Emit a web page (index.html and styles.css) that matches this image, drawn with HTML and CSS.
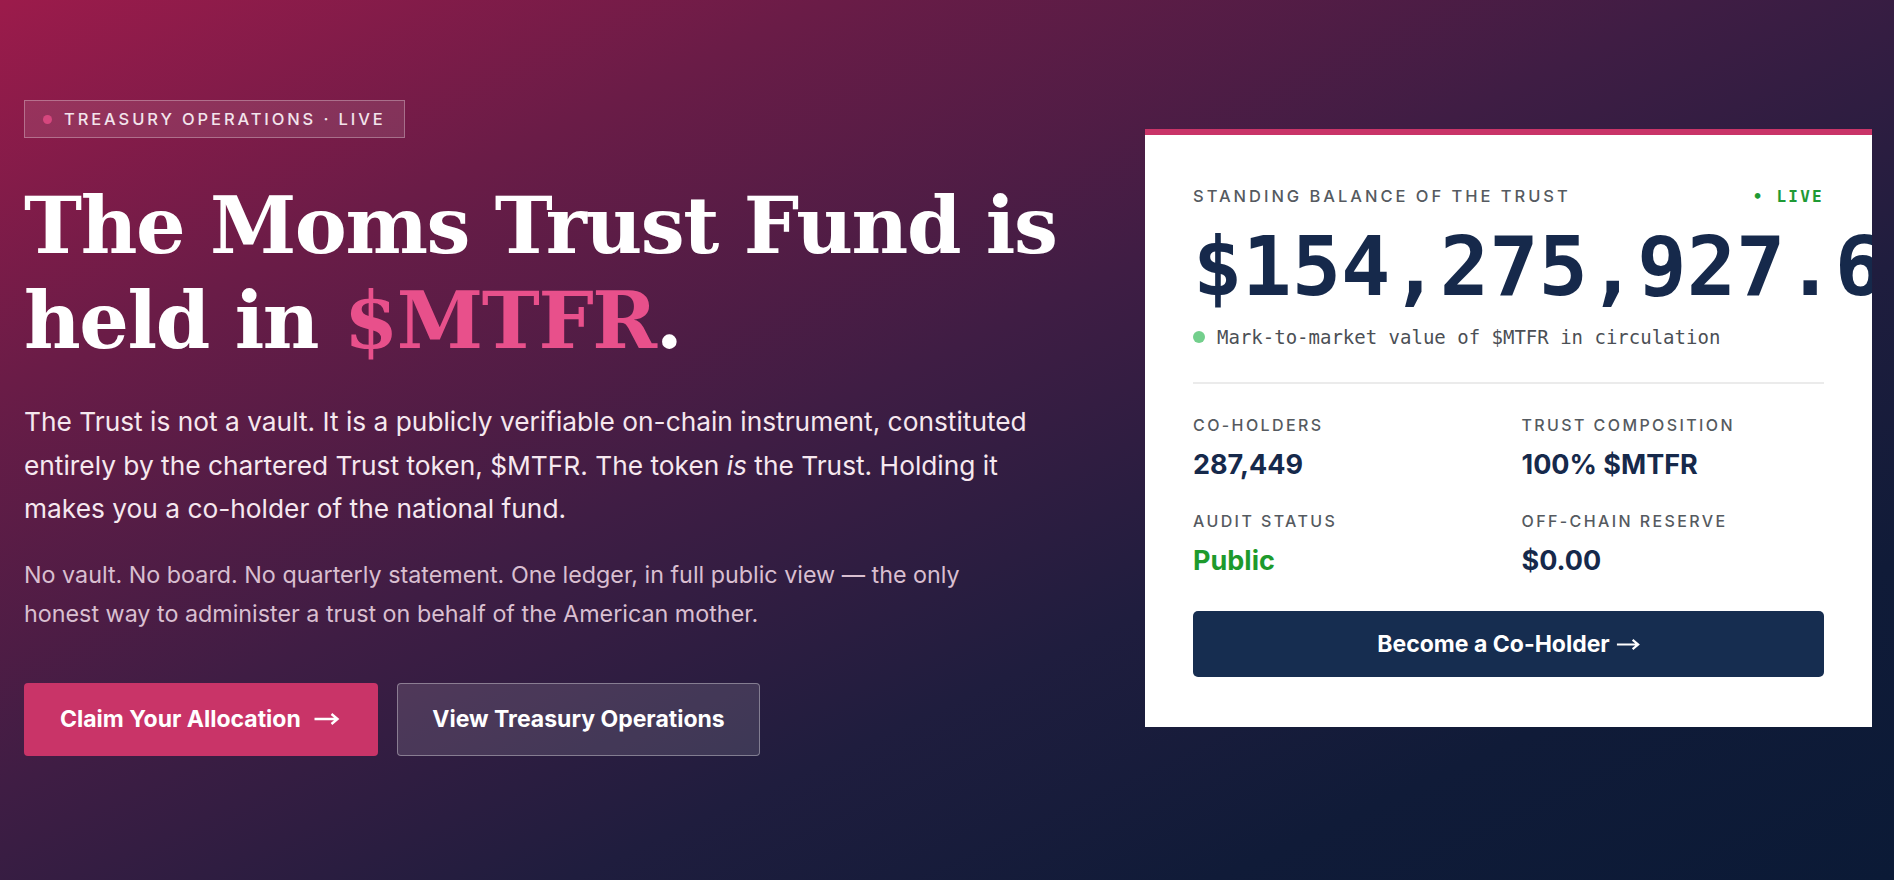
FILE: index.html
```html
<!DOCTYPE html>
<html lang="en">
<head>
<meta charset="utf-8">
<title>The Moms Trust Fund</title>
<link rel="stylesheet" href="styles.css">
</head>
<body>
<main class="hero">
  <section class="intro">
    <div class="badge"><span class="badge-dot"></span>TREASURY OPERATIONS · LIVE</div>
    <h1 class="title">The Moms Trust Fund is held in <span class="accent">$MTFR</span>.</h1>
    <p class="lead">The Trust is not a vault. It is a publicly verifiable on-chain instrument, constituted entirely by the chartered Trust token, $MTFR. The token <em>is</em> the Trust. Holding it makes you a co-holder of the national fund.</p>
    <p class="sub">No vault. No board. No quarterly statement. One ledger, in full public view — the only honest way to administer a trust on behalf of the American mother.</p>
    <div class="actions">
      <a class="btn btn-primary" href="#">Claim Your Allocation <svg class="arrow" viewBox="0 0 26 14" aria-hidden="true"><path d="M1 7H24M18 2L24 7L18 12"/></svg></a>
      <a class="btn btn-ghost" href="#">View Treasury Operations</a>
    </div>
  </section>
  <aside class="card">
    <div class="card-head">
      <span class="card-label">STANDING BALANCE OF THE TRUST</span>
      <span class="live">• LIVE</span>
    </div>
    <div class="balance">$154,275,927.63</div>
    <div class="note"><span class="note-dot"></span>Mark-to-market value of $MTFR in circulation</div>
    <div class="stats">
      <div class="stat">
        <div class="stat-label">CO-HOLDERS</div>
        <div class="stat-value">287,449</div>
      </div>
      <div class="stat">
        <div class="stat-label">TRUST COMPOSITION</div>
        <div class="stat-value">100% $MTFR</div>
      </div>
      <div class="stat">
        <div class="stat-label">AUDIT STATUS</div>
        <div class="stat-value stat-green">Public</div>
      </div>
      <div class="stat">
        <div class="stat-label">OFF-CHAIN RESERVE</div>
        <div class="stat-value">$0.00</div>
      </div>
    </div>
    <a class="card-btn" href="#">Become a Co-Holder <svg class="arrow-sm" viewBox="0 0 26 14" aria-hidden="true"><path d="M1 7H24M18 2L24 7L18 12"/></svg></a>
  </aside>
</main>
</body>
</html>
```

FILE: styles.css
```css
* { box-sizing: border-box; }
html, body { margin: 0; padding: 0; }
body {
  width: 1894px;
  height: 880px;
  overflow: hidden;
  font-family: "Inter", "Noto Sans", sans-serif;
  background: linear-gradient(to bottom right, #9c1b4b 0%, #6a1c47 22%, #3f1d44 45%, #1f1d3e 65%, #101b38 82%, #0b1a36 100%);
  color: #fff;
}
.hero {
  height: 880px;
  display: flex;
  align-items: center;
  justify-content: space-between;
  padding: 0 22px 24px 24px;
}
.intro {
  width: 1100px;
  display: flex;
  flex-direction: column;
  align-items: flex-start;
}
.badge {
  display: flex;
  align-items: center;
  height: 38px;
  padding: 0 18px 0 18px;
  border: 1px solid rgba(255, 255, 255, 0.3);
  background: rgba(255, 255, 255, 0.1);
  font-size: 16.5px;
  letter-spacing: 0.175em;
  font-weight: 500;
  color: #f3e4ec;
}
.badge-dot {
  width: 9px;
  height: 9px;
  border-radius: 50%;
  background: #d6477e;
  margin-right: 12px;
}
.title {
  margin: 40px 0 0;
  font-family: "DejaVu Serif", "Liberation Serif", serif;
  font-weight: 700;
  font-size: 78px;
  line-height: 95px;
  letter-spacing: -0.018em;
  color: #fff;
}
.accent { color: #e8508b; }
.lead {
  margin: 32px 0 0;
  max-width: 1050px;
  font-size: 26.3px;
  line-height: 43.3px;
  color: #f6e8ef;
}
.lead em { font-style: italic; }
.sub {
  margin: 26px 0 0;
  max-width: 990px;
  font-size: 23.3px;
  line-height: 38.6px;
  color: #d9bfd0;
}
.actions {
  display: flex;
  gap: 19px;
  margin-top: 49px;
}
.btn {
  display: flex;
  align-items: center;
  height: 73px;
  padding: 0 36px;
  border-radius: 4px;
  font-size: 23px;
  font-weight: 700;
  color: #fff;
  text-decoration: none;
  white-space: nowrap;
}
.btn-primary {
  width: 354px;
  background: #c93468;
}
.arrow {
  width: 27px;
  height: 14px;
  margin-left: 12px;
  fill: none;
  stroke: #fff;
  stroke-width: 2.4;
}
.btn-ghost {
  width: 363px;
  justify-content: center;
  background: rgba(255, 255, 255, 0.12);
  border: 1px solid rgba(255, 255, 255, 0.35);
}
.card {
  width: 727px;
  background: #fff;
  border-top: 6px solid #c93468;
  padding: 51px 48px 50px;
  overflow: hidden;
  color: #16294b;
}
.card-head {
  display: flex;
  justify-content: space-between;
  align-items: center;
}
.card-label {
  font-size: 16.5px;
  letter-spacing: 0.18em;
  font-weight: 500;
  color: #555a60;
}
.live {
  font-family: "DejaVu Sans Mono", monospace;
  font-weight: 700;
  font-size: 16px;
  letter-spacing: 0.14em;
  color: #1f9a35;
}
.balance {
  margin-top: 20px;
  font-family: "DejaVu Sans Mono", monospace;
  font-weight: 700;
  font-size: 82px;
  line-height: 82px;
  white-space: nowrap;
  color: #16294b;
}
.note {
  display: flex;
  align-items: center;
  margin-top: 18px;
  font-family: "DejaVu Sans Mono", monospace;
  font-size: 19px;
  color: #4b4f55;
}
.note-dot {
  width: 12px;
  height: 12px;
  border-radius: 50%;
  background: #73cf8c;
  margin-right: 12px;
}
.stats {
  margin-top: 34px;
  padding-top: 31px;
  border-top: 2px solid #ebebeb;
  display: grid;
  grid-template-columns: 1fr 1fr;
  column-gap: 26px;
  row-gap: 30px;
}
.stat-label {
  font-size: 16px;
  letter-spacing: 0.15em;
  font-weight: 500;
  color: #555a60;
}
.stat-value {
  margin-top: 13px;
  font-size: 27px;
  font-weight: 700;
  color: #16294b;
}
.stat-green { color: #1d9a2c; }
.card-btn {
  display: flex;
  align-items: center;
  justify-content: center;
  height: 66px;
  margin-top: 34px;
  border-radius: 5px;
  background: #162d50;
  color: #fff;
  font-size: 23px;
  font-weight: 700;
  text-decoration: none;
}
.arrow-sm {
  width: 24px;
  height: 13px;
  margin-left: 6px;
  fill: none;
  stroke: #fff;
  stroke-width: 2.4;
}
```
